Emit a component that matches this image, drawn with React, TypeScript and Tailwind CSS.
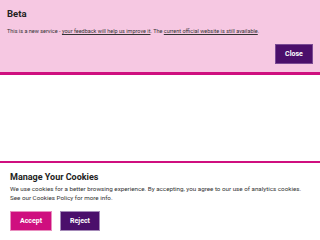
import React from "react";

export default function App() {
  return (
    <div className="w-[320px] h-[240px] bg-white flex flex-col overflow-hidden" style={{ fontFamily: "Roboto, 'Liberation Sans', sans-serif" }}>
      <div className="bg-[#f6c8e2] border-b-[3px] border-[#cf0f7f] px-[7px] pt-[8px] pb-[8px] flex flex-col">
        <h2 className="text-[9.5px] leading-[12px] font-bold text-[#222]">Beta</h2>
        <p className="mt-[7px] text-[5.5px] leading-[8px] text-[#333]">
          This is a new service - <a className="underline">your feedback will help us improve it</a>. The <a className="underline">current official website is still available</a>.
        </p>
        <div className="flex justify-end mt-[9px]">
          <button className="w-[38px] h-[20px] bg-[#4b0f6b] text-white text-[7px] font-bold border border-[#7a4a94]">Close</button>
        </div>
      </div>
      <div className="flex-1" />
      <div className="border-t-[2px] border-[#cf0f7f] px-[10px] pt-[8px] pb-[9px] bg-white">
        <h2 className="text-[9px] leading-[13px] font-bold text-[#222]">Manage Your Cookies</h2>
        <p className="mt-[1px] text-[6.25px] leading-[9px] text-[#333]">
          We use cookies for a better browsing experience. By accepting, you agree to our use of analytics cookies. See our Cookies Policy for more info.
        </p>
        <div className="flex gap-[8px] mt-[8px]">
          <button className="w-[42px] h-[20px] bg-[#cf0f7f] text-white text-[7px] font-bold border border-[#e98fbf]">Accept</button>
          <button className="w-[40px] h-[20px] bg-[#4b0f6b] text-white text-[7px] font-bold border border-[#a48ab8]">Reject</button>
        </div>
      </div>
    </div>
  );
}
